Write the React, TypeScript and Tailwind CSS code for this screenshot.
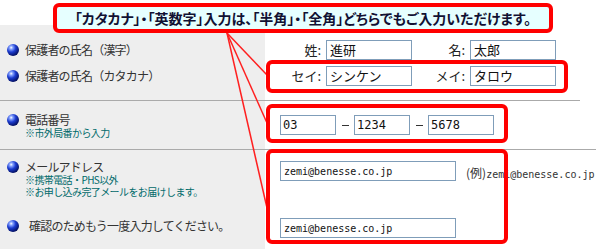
import React from 'react';

const jp = "font-['Noto_Sans_CJK_JP',sans-serif]";
const mono = "font-['DejaVu_Sans_Mono',monospace]";

function Bullet() {
  return (
    <svg width="12" height="12" viewBox="0 0 12 12" className="shrink-0">
      <defs>
        <radialGradient id="ball" cx="0.35" cy="0.3" r="0.75">
          <stop offset="0" stopColor="#ffffff" />
          <stop offset="0.18" stopColor="#8aa6ff" />
          <stop offset="0.5" stopColor="#1c3cd0" />
          <stop offset="1" stopColor="#000a55" />
        </radialGradient>
      </defs>
      <circle cx="6" cy="6" r="6" fill="url(#ball)" />
    </svg>
  );
}

function Field({ value, w, font = 'text-[13px] pl-[3px]' }: { value: string; w: string; font?: string }) {
  return (
    <div className={`${w} h-[20px] border border-[#7f9db9] bg-white flex items-center text-[#111] ${font}`}>
      {value}
    </div>
  );
}

function Label({ text, gap = 'gap-[6px]' }: { text: string; gap?: string }) {
  return (
    <div className={`h-[20px] flex items-center ${gap} text-[12px] leading-[14px] text-[#333] tracking-[-0.8px]`}>
      <Bullet />
      <span>{text}</span>
    </div>
  );
}

export default function App() {
  return (
    <div className={`relative w-[596px] h-[249px] bg-white overflow-hidden ${jp}`}>
      <div className="h-[25px]" />

      {/* 氏名 */}
      <div className="flex h-[75px]">
        <div className="w-[265px] bg-[#eeeeee] pl-[7px] pt-[15px] flex flex-col gap-[6px]">
          <Label text="保護者の氏名（漢字）" />
          <Label text="保護者の氏名（カタカナ）" />
        </div>
        <div className="flex-1 pt-[15px] flex flex-col gap-[6px] text-[13px] text-[#222]">
          <div className="flex items-center">
            <span className="w-[56px] text-right">姓:</span>
            <span className="w-[5px]" />
            <Field value="進研" w="w-[86px]" />
            <span className="w-[53px] text-right">名:</span>
            <span className="w-[5px]" />
            <Field value="太郎" w="w-[86px]" />
          </div>
          <div className="flex items-center">
            <span className="w-[56px] text-right">セイ:</span>
            <span className="w-[5px]" />
            <Field value="シンケン" w="w-[86px]" />
            <span className="w-[53px] text-right">メイ:</span>
            <span className="w-[5px]" />
            <Field value="タロウ" w="w-[86px]" />
          </div>
        </div>
      </div>
      <div className="h-px w-[580px] bg-[#aaaaaa]" />

      {/* 電話番号 */}
      <div className="flex h-[48px]">
        <div className="w-[265px] bg-[#eeeeee] pl-[7px] pt-[12px]">
          <div className="flex items-center gap-[6px] text-[12px] leading-[14px] text-[#333] tracking-[-0.8px]">
            <Bullet />
            <span>電話番号</span>
          </div>
          <div className="pl-[18px] text-[10px] leading-[12px] text-[#006a6a] tracking-[-0.6px]">※市外局番から入力</div>
        </div>
        <div className="flex-1 pl-[15px] pt-[14px] flex items-start">
          <Field value="03" w="w-[56px]" font={`${mono} text-[12px] pl-[2px]`} />
          <span className="w-[18px] h-[20px] flex items-center justify-center">
            <span className="w-[7px] h-px bg-[#333]" />
          </span>
          <Field value="1234" w="w-[56px]" font={`${mono} text-[12px] pl-[2px]`} />
          <span className="w-[18px] h-[20px] flex items-center justify-center">
            <span className="w-[7px] h-px bg-[#333]" />
          </span>
          <Field value="5678" w="w-[66px]" font={`${mono} text-[12px] pl-[2px]`} />
        </div>
      </div>
      <div className="h-px w-full bg-[#aaaaaa]" />

      {/* メールアドレス */}
      <div className="flex h-[99px]">
        <div className="w-[265px] bg-[#eeeeee] pl-[7px] pt-[10px]">
          <div className="flex items-center gap-[6px] text-[12px] leading-[14px] text-[#333] tracking-[-0.8px]">
            <Bullet />
            <span>メールアドレス</span>
          </div>
          <div className="pl-[18px] text-[10px] leading-[12px] text-[#006a6a] tracking-[-0.6px]">
            <div>※携帯電話・PHS以外</div>
            <div>※お申し込み完了メールをお届けします。</div>
          </div>
          <div className="mt-[18px]">
            <Label text="確認のためもう一度入力してください。" gap="gap-[10px]" />
          </div>
        </div>
        <div className="flex-1 pl-[15px] pt-[11px] flex flex-col gap-[36px]">
          <div className="flex items-start">
            <Field value="zemi@benesse.co.jp" w="w-[176px]" font={`${mono} text-[10px] pl-[3px]`} />
            <span className="ml-[10px] mt-[5px] whitespace-nowrap text-[12px] leading-[14px] text-[#333]">
              (例)<span className={`${mono} text-[10px]`}>zemi@benesse.co.jp</span>
            </span>
          </div>
          <Field value="zemi@benesse.co.jp" w="w-[176px]" font={`${mono} text-[10px] pl-[3px]`} />
        </div>
      </div>

      {/* annotation overlay */}
      <svg className="absolute left-0 top-0 pointer-events-none" width="596" height="249">
        <g stroke="#ff2020" strokeWidth="1.5" fill="none">
          <line x1="227" y1="33" x2="267" y2="75" />
          <line x1="227" y1="33" x2="267" y2="123" />
          <line x1="227" y1="33" x2="267" y2="208" />
        </g>
      </svg>
      <div className="absolute left-[266px] top-[60px] w-[302px] h-[33px] border-[4px] border-[#ff0000] rounded-[6px]" />
      <div className="absolute left-[266px] top-[104px] w-[242px] h-[39px] border-[4px] border-[#ff0000] rounded-[6px]" />
      <div className="absolute left-[266px] top-[149px] w-[242px] h-[95px] border-[4px] border-[#ff0000] rounded-[6px]" />
      <div className="absolute left-[53px] top-[3px] w-[500px] h-[30px] border-[4px] border-[#ff0000] rounded-[6px] bg-[#e6ffff] flex items-center justify-center text-[14px] font-bold text-[#111133] [font-feature-settings:'palt'] whitespace-nowrap">
        「カタカナ」・「英数字」入力は、「半角」・「全角」どちらでもご入力いただけます。
      </div>
    </div>
  );
}
